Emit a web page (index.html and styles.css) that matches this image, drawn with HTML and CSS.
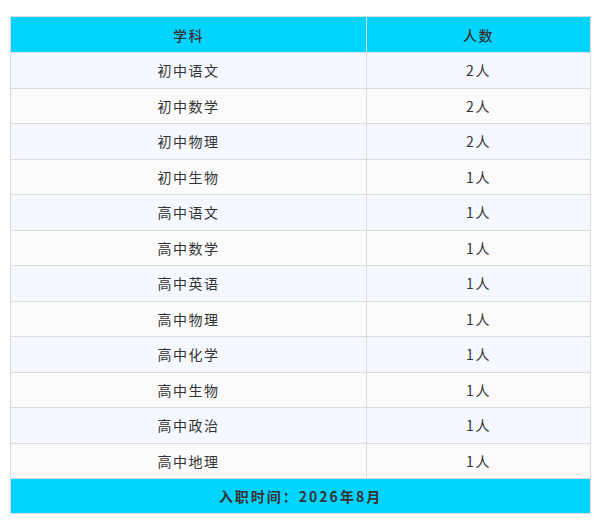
FILE: index.html
```html
<!DOCTYPE html>
<html lang="zh">
<head>
<meta charset="utf-8">
<link rel="stylesheet" href="styles.css">
</head>
<body>
<table class="tbl">
  <colgroup><col class="c1"><col class="c2"></colgroup>
  <thead>
    <tr class="head"><th>学科</th><th>人数</th></tr>
  </thead>
  <tbody>
    <tr class="odd"><td>初中语文</td><td>2人</td></tr>
    <tr class="even"><td>初中数学</td><td>2人</td></tr>
    <tr class="odd"><td>初中物理</td><td>2人</td></tr>
    <tr class="even"><td>初中生物</td><td>1人</td></tr>
    <tr class="odd"><td>高中语文</td><td>1人</td></tr>
    <tr class="even"><td>高中数学</td><td>1人</td></tr>
    <tr class="odd"><td>高中英语</td><td>1人</td></tr>
    <tr class="even"><td>高中物理</td><td>1人</td></tr>
    <tr class="odd"><td>高中化学</td><td>1人</td></tr>
    <tr class="even"><td>高中生物</td><td>1人</td></tr>
    <tr class="odd"><td>高中政治</td><td>1人</td></tr>
    <tr class="even"><td>高中地理</td><td>1人</td></tr>
    <tr class="foot"><td colspan="2">入职时间：2026年8月</td></tr>
  </tbody>
</table>
</body>
</html>
```
FILE: styles.css
```css
html, body {
  margin: 0;
  padding: 0;
  background: #ffffff;
}
body {
  padding: 16px 10px 0 10px;
  font-family: "Noto Sans CJK SC", "Noto Sans", sans-serif;
  color: #333333;
}
.tbl {
  width: 580px;
  border-collapse: collapse;
  table-layout: fixed;
  font-size: 14px;
  letter-spacing: 1.5px;
}
.c1 { width: 356px; }
.c2 { width: 224px; }
.tbl th, .tbl td {
  border: 1px solid #dcdcdc;
  text-align: center;
  padding: 0;
  height: 34.5px;
  line-height: 20px;
}
.head th {
  background: #00d4ff;
  font-weight: 500;
  height: 35px;
}
.odd td { background: #f5f9ff; }
.even td { background: #fbfbfb; }
.foot td {
  background: #00d4ff;
  font-weight: 700;
  letter-spacing: 2px;
  height: 34px;
}
```
